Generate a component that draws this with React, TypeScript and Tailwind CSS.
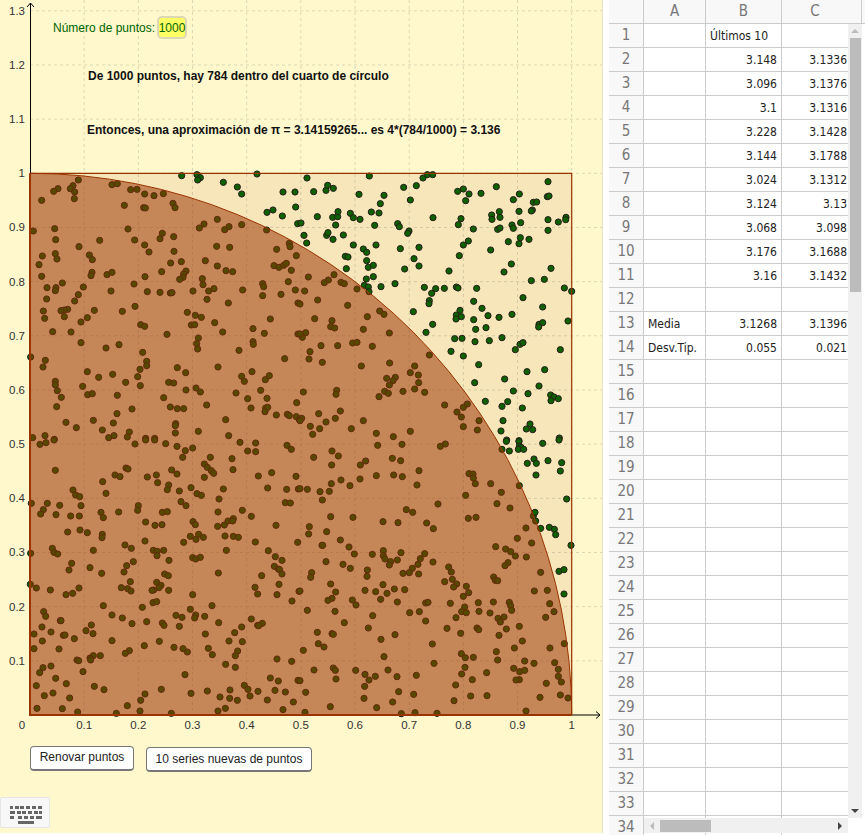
const OX = 30
const OY = 715
const UNIT = 541.7

// dot positions read off the plot, one block per quadrant: [left, top, "x,y x,y ..."] at 3x
const dotBlocks: [number, number, string][] = [
  [0, 160, `235,60 219,77 211,86 224,96 174,86 161,94 125,121 223,116 100,213 164,206 167,239 237,260 299,241 336,74 352,71 392,89 411,88 434,102 462,107 490,101 373,136 431,143 436,144 519,130 525,143 384,207 404,240 434,255 447,276 487,220 480,236 521,230 522,274 652,178 612,192 598,204 674,209 687,200 725,194 800,210 650,259 689,262 868,250 870,260 830,268 889,287 127,288 166,281 171,297 117,314 125,349 268,285 277,299 276,337 273,347 321,344 336,337 435,350 402,372 485,335 512,309 544,305 616,302 652,318 678,332 698,335 558,333 551,342 549,352 539,358 607,356 609,374 579,393 642,386 626,393 621,418 728,390 685,429 141,383 168,383 166,392 187,369 250,381 235,404 224,423 140,417 333,393 442,395 480,397 511,399 516,398 405,439 367,454 283,451 262,473 243,486 203,448 193,450 183,452 193,470 130,453 134,475 158,515 213,516 243,548 318,564 357,554 422,494 434,499 501,523 562,457 586,466 604,472 574,495 584,494 644,488 668,516 595,534 590,551 593,567 759,506 793,520 811,477 759,545 760,553 717,571 854,596 788,371 791,380 788,407 843,403 865,365 886,390 822,317 837,322 851,316 859,310 874,331 894,429 894,522 92,591 136,601 129,621 428,577 440,604 440,617 420,628 413,650 421,677 262,635 296,652 338,643 377,667 248,679 166,664 166,675 172,692 184,712 170,740 263,704 277,701 352,706 396,747 351,761 340,789 229,803 198,787 280,781 307,810 388,816 135,827 98,833 342,827 326,833 382,831 437,835 464,835 491,713 506,667 521,669 532,623 557,638 558,690 588,684 601,696 654,621 620,735 511,741 532,746 551,746 527,791 526,797 526,819 595,814 677,779 686,827 708,699 725,649 733,664 756,635 743,716 753,744 782,691 796,659 808,647 801,715 797,744 803,742 795,755 829,765 862,763 868,767 890,728 889,770 898,779 163,838 545,47 591,44 601,53 593,60 670,67 712,81 725,102 771,42 849,96 885,96 887,141 819,150 801,157 847,168 893,191`],
  [300, 160, `21,54 208,48 41,95 78,91 83,76 100,85 177,103 252,106 241,131 331,120 311,82 349,77 369,54 382,44 398,44 473,94 490,87 507,102 497,122 543,100 589,80 744,65 658,102 640,119 700,127 710,126 742,110 747,108 697,150 694,153 657,154 575,165 598,155 600,172 576,178 636,195 662,188 640,205 744,179 775,186 798,172 797,179 744,211 399,173 483,176 475,194 520,207 593,208 600,204 52,170 98,172 113,170 114,155 107,195 151,160 160,173 180,178 214,156 237,159 224,196 293,191 298,200 327,213 323,220 3,189 12,226 20,249 80,226 84,218 99,238 130,225 160,255 228,255 190,267 200,277 301,266 357,262 136,289 144,291 200,302 205,322 220,316 139,326 342,296 357,318 314,327 478,287 490,255 505,243 572,270 625,245 657,251 661,233 687,238 447,333 634,312 612,336 753,325 694,362 733,358 220,350 199,357 193,376 205,381 207,395 243,380 285,371 373,382 407,386 433,385 395,400 469,381 474,384 530,385 793,384 815,394 669,413 388,422 387,431 521,424 546,445 728,441 340,455 480,451 469,465 484,470 468,477 398,493 564,467 597,472 636,463 521,479 527,508 558,503 378,517 717,493 728,488 716,501 804,483 464,536 486,535 525,545 568,542 606,533 660,553 669,548 646,569 781,569 453,574 490,588 536,614 681,635 734,629 524,668 614,657 640,693 684,701 717,678 752,705 762,711 775,716 753,722 556,724 623,725 606,739 667,744 609,782 603,813 690,792 679,807 698,809 620,840 657,842 778,834 25,351 102,344 85,360 73,368 123,367 133,371 171,387 14,393 53,420 143,436 0,432 239,453 252,463 202,470 44,476 96,482 92,500 104,504 190,508 268,519 17,518 7,532 0,522 63,557 113,557 158,549 171,547 217,559 30,575 27,597 67,607 184,618 269,609 344,618 331,638 355,645 260,655 286,652 279,662 268,675 356,668 344,687 374,697 309,694 254,694 265,700 237,710 110,691 108,703 10,696 388,585 434,735 471,756 490,742 502,732 484,771 537,782 490,800 532,810 121,753 56,761 106,775 78,786 190,782 5,775 0,782 31,799 59,806 38,823 154,806 229,820 280,830 331,814`],
  [0, 440, `120,13 138,8 162,0 405,12 437,0 464,0 497,11 531,19 556,32 548,52 578,24 631,52 696,56 720,7 767,9 743,33 767,35 861,16 874,28 613,72 622,82 634,92 641,100 699,89 515,90 531,102 166,91 378,84 384,87 345,105 360,110 308,125 442,111 469,105 473,128 613,112 775,108 815,98 888,109 219,150 227,165 239,170 318,160 506,135 502,149 538,153 573,143 591,161 604,166 670,147 657,177 803,144 860,148 895,147 94,190 142,190 130,209 122,222 179,196 168,224 243,197 212,228 238,228 303,217 310,233 415,197 413,211 356,216 543,185 558,197 487,217 502,215 437,246 465,256 486,254 579,245 586,254 654,216 653,259 673,255 684,243 700,236 698,243 727,211 754,229 828,256 856,188 871,189 203,276 240,270 262,278 307,283 306,293 280,331 375,315 394,325 435,303 460,331 472,334 471,347 491,331 507,361 551,307 571,289 588,298 596,283 610,292 675,288 700,289 715,292 679,331 766,306 805,332 893,307 157,325 162,337 173,342 92,340 215,370 207,390 270,383 305,400 400,365 380,377 372,396 391,425 494,402 505,407 578,353 587,357 601,352 655,399 826,350 846,361 823,379 835,387 839,389 846,402 785,407 109,444 151,450 91,433 198,464 218,460 237,444 364,443 383,446 393,453 470,427 483,436 477,443 461,450 456,451 506,451 578,464 765,442 773,462 837,433 831,464 897,454 876,483 310,497 427,502 459,488 470,485 636,497 571,508 131,515 137,529 126,561 153,576 102,582 181,542 183,542 274,555 258,572 279,581 336,525 367,534 396,551 440,545 487,549 492,556 528,526 546,532 538,559 587,525 584,534 614,529 656,548 754,537 787,550 773,556 776,557 725,561 704,578 616,582 190,586 195,585 223,596 127,603 102,626 177,627 336,602 478,604 433,617 522,622 549,626 562,636 625,625 637,644 687,603 727,605 713,633 706,647 388,632 376,640 301,647 280,647 270,654 272,660 231,660 236,662 153,678 129,683 119,698 249,695 677,673 706,682 831,657 875,664 555,704 167,715 199,731 109,737 283,739 312,749 484,748 435,762 422,781 159,759 133,767 209,774 382,797 111,805 187,806 233,816 349,820 420,813 514,820 573,760 622,753 660,771 690,750 689,775 712,781 676,805 654,813 733,736 744,748 750,768 774,754 802,780 811,714 835,723 825,751 856,756 894,721 880,786 849,809`],
  [300, 440, `233,16 306,13 421,19 436,12 96,33 41,52 115,48 95,75 197,63 181,75 277,55 302,62 357,92 281,105 307,110 229,107 180,117 123,120 94,131 150,137 88,154 60,155 67,180 22,148 0,146 351,135 507,101 519,102 520,114 526,131 572,131 604,157 497,166 658,137 591,191 630,204 414,192 319,209 338,217 92,230 159,232 249,245 294,248 380,249 400,266 505,235 528,232 700,228 707,243 678,264 28,260 26,282 80,275 121,300 66,316 68,316 147,321 163,342 217,343 250,332 250,347 255,357 272,365 268,375 292,360 303,338 374,341 361,356 354,373 399,366 78,365 129,373 151,385 202,390 201,409 337,385 328,398 309,400 356,402 446,381 454,396 457,418 434,425 470,432 461,441 499,439 506,458 490,469 652,295 695,309 587,320 617,327 632,335 646,348 679,351 624,368 615,377 722,397 581,411 586,421 593,422 35,398 32,412 92,432 0,453 107,456 96,475 84,481 22,511 105,514 157,480 168,495 195,451 227,455 249,434 261,460 242,478 283,447 314,449 292,486 329,518 358,515 377,489 384,487 377,543 451,490 535,488 537,514 580,486 570,519 628,487 632,497 635,511 703,453 742,451 749,491 762,515 737,532 494,501 485,515 499,518 468,533 594,535 612,531 601,546 658,559 133,548 218,527 205,564 52,577 96,581 100,583 55,611 72,621 10,631 243,598 285,584 397,612 441,565 482,580 531,564 536,569 619,567 597,586 667,603 643,624 750,624 793,611 589,635 484,641 496,653 520,652 593,660 252,650 402,670 42,690 100,684 106,691 108,717 167,691 195,703 207,720 226,709 264,690 291,710 349,706 495,682 485,702 517,719 560,698 641,685 659,695 674,691 674,663 702,670 764,668 775,688 775,709 784,726 658,719 648,720 739,730 194,739 296,755 467,735 17,757 192,775 341,763 278,786 512,768 561,767 462,782 720,772 781,765 804,774 91,800 230,803 15,817 304,821 345,818 411,820 678,813 0,722 606,28 619,4 628,33 657,5 658,18 663,22 655,28 671,28 728,10 777,0 702,57 709,70 682,70 744,62 785,68 781,93 708,105 800,177 705,217 722,265 748,262 763,268 767,284 813,316 777,394 792,389 792,462`],
]

const dots = dotBlocks.flatMap(([left, top, list]) =>
  list.split(' ').map(p => {
    const [x, y] = p.split(',').map(Number)
    return { x: left + x / 3, y: top + y / 3 }
  })
)

const ticks = [1, 2, 3, 4, 5, 6, 7, 8, 9, 10, 11, 12, 13]

function Plot() {
  return (
    <svg width={602} height={730} className="block shrink-0">
      {/* grid */}
      {ticks.map(t => (
        <line key={`h${t}`} x1={OX} x2={602} y1={OY - (t / 10) * UNIT} y2={OY - (t / 10) * UNIT} stroke="#dcd8b4" strokeDasharray="3 3" />
      ))}
      {ticks.slice(0, 10).map(t => (
        <line key={`v${t}`} x1={OX + (t / 10) * UNIT} x2={OX + (t / 10) * UNIT} y1={0} y2={OY} stroke="#dcd8b4" strokeDasharray="3 3" />
      ))}

      {/* axes */}
      <path d="M30.5 715V3M27 7l3.5-4 3.5 4" fill="none" stroke="#000" strokeWidth={1} />
      <path d="M30 715H600M596 711.500l4 3.500-4 3.500" fill="none" stroke="#000" strokeWidth={1} />

      {/* points sit under the see-through square and quarter circle */}
      {dots.map((d, i) => (
        <circle key={i} cx={d.x} cy={d.y} r={3.1} fill="#006600" stroke="#1c1c1c" strokeWidth={1} />
      ))}

      <rect x={OX} y={OY - UNIT} width={UNIT} height={UNIT} fill="#993300" fillOpacity={0.09} />
      <path d={`M${OX} ${OY}V${OY - UNIT}A${UNIT} ${UNIT} 0 0 1 ${OX + UNIT} ${OY}Z`} fill="#993300" fillOpacity={0.53} />
      <path d={`M${OX} ${OY - UNIT}A${UNIT} ${UNIT} 0 0 1 ${OX + UNIT} ${OY}`} fill="none" stroke="#993300" strokeWidth={1} />
      <path d={`M${OX} ${OY - UNIT}H${OX + UNIT}V${OY}`} fill="none" stroke="#993300" strokeWidth={1.2} />
      <path d={`M${OX} ${OY - UNIT}V${OY}H${OX + UNIT}`} fill="none" stroke="#993300" strokeWidth={2} />

      {/* axis numbers */}
      <g fontSize={11.5} fill="#333">
        {ticks.map(t => (
          <text key={t} x={25} y={OY - (t / 10) * UNIT + 4} textAnchor="end">
            {t === 10 ? '1' : (t / 10).toFixed(1)}
          </text>
        ))}
        {ticks.slice(0, 10).map(t => (
          <text key={t} x={OX + (t / 10) * UNIT} y={729} textAnchor="middle">
            {t === 10 ? '1' : (t / 10).toFixed(1)}
          </text>
        ))}
        <text x={22} y={729} textAnchor="middle">0</text>
      </g>

      <text x={53} y={32} fontSize={12} fill="#006400">Número de puntos:</text>
      <text x={88} y={80} fontSize={12} fontWeight="bold" fill="#111">De 1000 puntos, hay 784 dentro del cuarto de círculo</text>
      <text x={87} y={134} fontSize={12} fontWeight="bold" fill="#111">Entonces, una aproximación de π = 3.14159265... es 4*(784/1000) = 3.136</text>
    </svg>
  )
}

function KeyboardIcon() {
  const rows = [
    { y: 805, keys: [[9, 3], [14, 4], [19, 4], [25, 4], [31, 4], [37, 4]] },
    { y: 810, keys: [[9, 5], [16, 4], [21, 4], [27, 4], [33, 4], [38, 3]] },
    { y: 815, keys: [[9, 4], [17, 4], [23, 4], [29, 4], [35, 6]] },
  ]
  return (
    <svg width={50} height={31} viewBox="0 797 50 31" className="block">
      {rows.map(r => r.keys.map(([x, w]) => <rect key={`${r.y}-${x}`} x={x} y={r.y} width={w} height={3} fill="#666" />))}
      <rect x={17} y={820} width={16} height={3} fill="#666" />
    </svg>
  )
}

const sheet: Record<number, [string, string, string]> = {
  1: ['', 'Últimos 10', ''],
  2: ['', '3.148', '3.1336'],
  3: ['', '3.096', '3.1376'],
  4: ['', '3.1', '3.1316'],
  5: ['', '3.228', '3.1428'],
  6: ['', '3.144', '3.1788'],
  7: ['', '3.024', '3.1312'],
  8: ['', '3.124', '3.13'],
  9: ['', '3.068', '3.098'],
  10: ['', '3.176', '3.1688'],
  11: ['', '3.16', '3.1432'],
  13: ['Media', '3.1268', '3.1396'],
  14: ['Desv.Tip.', '0.055', '0.021'],
}

const rowNumbers = Array.from({ length: 34 }, (_, i) => i + 1)

function Spreadsheet() {
  return (
    <div className="relative h-full w-[256px] overflow-hidden bg-white font-['DejaVu_Sans_Condensed','DejaVu_Sans',sans-serif] text-[12px] text-[#222]">
      <div className="flex h-[24px] border-b border-[#cbcbcb] bg-[#f8f8f8] text-[15px] text-[#777]">
        <div className="w-[35px] border-r border-[#cbcbcb]" />
        <div className="flex w-[62px] items-center justify-center border-r border-[#cbcbcb]">A</div>
        <div className="flex w-[76px] items-center justify-center border-r border-[#cbcbcb]">B</div>
        <div className="flex w-[80px] items-center justify-center border-r border-[#cbcbcb] pr-[13px]">C</div>
      </div>
      <div className="w-[239px]">
        {rowNumbers.map(n => {
          const [a, b, c] = sheet[n] ?? ['', '', '']
          return (
            <div key={n} className="flex h-[24px] border-b border-[#cbcbcb]">
              <div className="flex w-[35px] items-center justify-center border-r border-[#cbcbcb] bg-[#f8f8f8] text-[15px] text-[#777]">{n}</div>
              <div className="flex w-[62px] items-center border-r border-[#cbcbcb] pl-[4px]">{a}</div>
              {n === 1 ? (
                <div className="flex w-[76px] items-center border-r border-[#cbcbcb] pl-[4px]">{b}</div>
              ) : (
                <div className="flex w-[76px] items-center justify-end border-r border-[#cbcbcb] pr-[4px]">{b}</div>
              )}
              <div className="flex w-[66px] items-center justify-end pr-[1px]">{c}</div>
            </div>
          )
        })}
      </div>

      {/* vertical scrollbar */}
      <div className="absolute left-[239px] top-[24px] flex h-[794px] w-[14px] flex-col items-center bg-[#f0f0f0]">
        <div className="mt-[5px] h-0 w-0 border-x-[4px] border-b-[4px] border-x-transparent border-b-[#bbb]" />
        <div className="mt-[5px] h-[254px] w-[11px] bg-[#bcbcbc]" />
        <div className="mt-auto mb-[5px] h-0 w-0 border-x-[4px] border-t-[4px] border-x-transparent border-t-[#444]" />
      </div>

      {/* horizontal scrollbar */}
      <div className="absolute left-[35px] top-[818px] flex h-[15px] w-[204px] items-center bg-[#f0f0f0]">
        <div className="ml-[6px] h-0 w-0 border-y-[4px] border-r-[4px] border-y-transparent border-r-[#bbb]" />
        <div className="ml-[6px] h-[12px] w-[51px] bg-[#bcbcbc]" />
        <div className="ml-auto mr-[6px] h-0 w-0 border-y-[4px] border-l-[4px] border-y-transparent border-l-[#444]" />
      </div>
    </div>
  )
}

export default function App() {
  return (
    <div className="flex h-[835px] w-[865px] overflow-hidden bg-white font-['Liberation_Sans',Arial,sans-serif]">
      <div className="relative flex h-[833px] w-[603px] shrink-0 flex-col border-r border-[#e8e2c4] bg-[#fff8cd]">
        <Plot />

        {/* the points-count input box lies over the plot */}
        <div className="absolute left-[157px] top-[16px] flex h-[23px] w-[30px] items-center justify-center rounded-[5px] border-2 border-[#dcd8b4] bg-[#ffff66] text-[12px] text-[#006400]">
          1000
        </div>

        <div className="mt-[16px] flex items-start gap-[12px] pl-[30px] text-[12px] text-[#222]">
          <button className="h-[25px] w-[104px] rounded-[4px] border border-b-2 border-[#777] bg-white pb-[3px]">Renovar puntos</button>
          <button className="mt-px h-[25px] w-[166px] rounded-[4px] border border-b-2 border-[#777] bg-white pb-[1px]">10 series nuevas de puntos</button>
        </div>

        <div className="mt-auto mb-[5px] h-[31px] w-[50px] rounded-[2px] border border-[#e6e6e6] bg-[#f7f7f7]">
          <KeyboardIcon />
        </div>
      </div>
      <div className="w-[6px] shrink-0 bg-white" />
      <Spreadsheet />
    </div>
  )
}
